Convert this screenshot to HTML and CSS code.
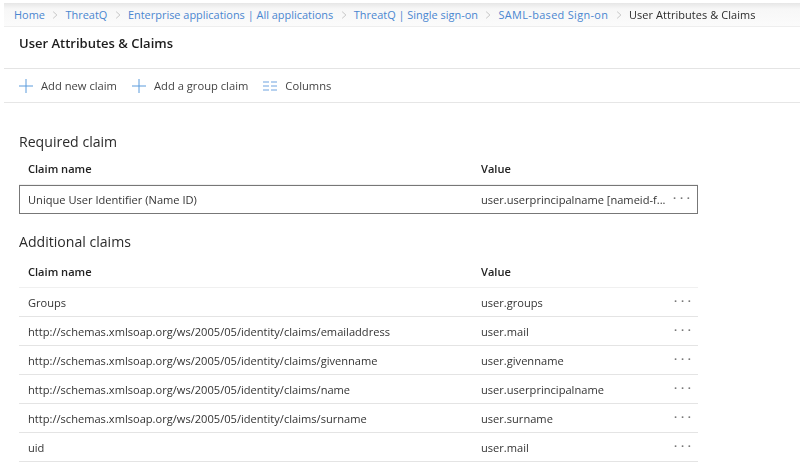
FILE: index.html
```html
<!DOCTYPE html>
<html lang="en">
<head>
<meta charset="utf-8">
<title>User Attributes &amp; Claims</title>
<link rel="stylesheet" href="styles.css">
</head>
<body>
<nav class="crumbs">
  <a>Home</a><svg class="chev" viewBox="0 0 8 12"><path d="M1.5 1.5 6.5 6 1.5 10.5"/></svg>
  <a>ThreatQ</a><svg class="chev" viewBox="0 0 8 12"><path d="M1.5 1.5 6.5 6 1.5 10.5"/></svg>
  <a>Enterprise applications | All applications</a><svg class="chev" viewBox="0 0 8 12"><path d="M1.5 1.5 6.5 6 1.5 10.5"/></svg>
  <a>ThreatQ | Single sign-on</a><svg class="chev" viewBox="0 0 8 12"><path d="M1.5 1.5 6.5 6 1.5 10.5"/></svg>
  <a class="wide">SAML-based Sign-on</a><svg class="chev" viewBox="0 0 8 12"><path d="M1.5 1.5 6.5 6 1.5 10.5"/></svg>
  <span>User Attributes &amp; Claims</span>
</nav>
<main class="page">
  <h1 class="title">User Attributes &amp; Claims</h1>
  <div class="toolbar">
    <div class="tool"><svg class="ic" viewBox="0 0 14 14"><path d="M7 0V14M0 7H14"/></svg>Add new claim</div>
    <div class="tool"><svg class="ic" viewBox="0 0 14 14"><path d="M7 0V14M0 7H14"/></svg>Add a group claim</div>
    <div class="tool"><svg class="ic cols" viewBox="0 0 14 10"><path d="M0 1H6M8 1H14M0 5H6M8 5H14M0 9H6M8 9H14"/></svg>Columns</div>
  </div>

  <h2 class="section first">Required claim</h2>
  <div class="row head"><div class="name">Claim name</div><div class="val">Value</div></div>
  <div class="row boxed"><div class="name">Unique User Identifier (Name ID)</div><div class="val">user.userprincipalname [nameid-f...</div><div class="more">&middot;&middot;&middot;</div></div>

  <h2 class="section">Additional claims</h2>
  <div class="row head"><div class="name">Claim name</div><div class="val">Value</div></div>
  <div class="row"><div class="name">Groups</div><div class="val">user.groups</div><div class="more">&middot;&middot;&middot;</div></div>
  <div class="row"><div class="name">http://schemas.xmlsoap.org/ws/2005/05/identity/claims/emailaddress</div><div class="val">user.mail</div><div class="more">&middot;&middot;&middot;</div></div>
  <div class="row"><div class="name">http://schemas.xmlsoap.org/ws/2005/05/identity/claims/givenname</div><div class="val">user.givenname</div><div class="more">&middot;&middot;&middot;</div></div>
  <div class="row"><div class="name">http://schemas.xmlsoap.org/ws/2005/05/identity/claims/name</div><div class="val">user.userprincipalname</div><div class="more">&middot;&middot;&middot;</div></div>
  <div class="row"><div class="name">http://schemas.xmlsoap.org/ws/2005/05/identity/claims/surname</div><div class="val">user.surname</div><div class="more">&middot;&middot;&middot;</div></div>
  <div class="row"><div class="name">uid</div><div class="val">user.mail</div><div class="more">&middot;&middot;&middot;</div></div>
</main>
</body>
</html>
```
FILE: styles.css
```css
* { box-sizing: border-box; }
html, body { margin: 0; height: 100%; overflow: hidden; }
body {
  background: #fff;
  color: #2b2b2b;
  font-family: "Open Sans", "Noto Sans", sans-serif;
  font-size: 11.1px;
  padding-top: 3px;
  filter: blur(0.3px);
}
.crumbs {
  margin-left: 4px;
  height: 24px;
  display: flex;
  align-items: center;
  gap: 7.3px;
  padding-left: 10px;
  font-size: 10.95px;
  background: linear-gradient(#e6e6e6 0, #f7f7f7 6px, #fbfbfb 100%);
  border-bottom: 1px solid #eee;
  white-space: nowrap;
}
.crumbs a { color: #4a86d0; }
.crumbs .wide { letter-spacing: 0.33px; }
.crumbs span { color: #2b2b2b; letter-spacing: 0.08px; }
.chev { width: 6px; height: 10px; fill: none; stroke: #b5b5b5; stroke-width: 1; }
.page { margin-left: 4px; }
.title {
  margin: 0;
  height: 42px;
  padding: 7px 0 0 15px;
  font-size: 13px;
  line-height: 18px;
  font-weight: 600;
  color: #1c1c1c;
  border-bottom: 1px solid #e4e4e4;
}
.toolbar {
  height: 34px;
  display: flex;
  align-items: center;
  gap: 15px;
  padding-left: 15px;
  border-bottom: 1px solid #e6e6e6;
  color: #444;
  font-size: 11.2px;
}
.tool { display: flex; align-items: center; gap: 8px; }
.ic { width: 14px; height: 14px; fill: none; stroke: #5b9bdc; stroke-width: 1; }
.cols { height: 10px; stroke: #6fa3e0; }
.section {
  margin: 0 0 0 15px;
  height: 45px;
  padding-top: 19px;
  font-size: 14.1px;
  line-height: 18px;
  font-weight: 500;
  color: #2b2b2b;
}
.section.first { margin-top: 30px; padding-top: 0; height: 23px; }
.row {
  width: 679px;
  margin-left: 15px;
  height: 29px;
  display: flex;
  align-items: center;
  padding-left: 9px;
  border-bottom: 1px solid #e4e4e4;
  color: #333;
}
.head { font-weight: 600; color: #222; border-bottom-color: #f0f0f0; padding-bottom: 3px; }
.boxed { border: 1px solid #777; padding-left: 8px; }
.name { width: 453px; flex: none; }
.val { flex: 1; }
.more { width: 24px; flex: none; color: #777; font-size: 11px; font-weight: 700; letter-spacing: 3.8px; line-height: 10px; margin-top: -3px; }
```
